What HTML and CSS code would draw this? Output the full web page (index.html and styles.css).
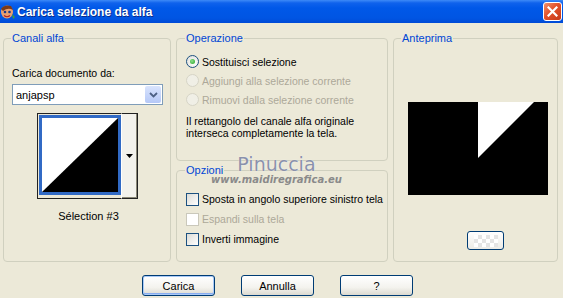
FILE: index.html
```html
<!DOCTYPE html>
<html lang="it">
<head>
  <meta charset="UTF-8">
  <title>Carica selezione da alfa</title>
  <link rel="stylesheet" href="styles.css">
</head>
<body>
  <div class="window">
    <div class="titlebar">
      <svg class="app-icon" width="15" height="16" viewBox="0 0 15 16">
        <ellipse cx="7" cy="8" rx="6" ry="6.5" fill="#e8a070"/>
        <path d="M1 5 Q4 0 11 2 L13 6 Q8 3 3 7 Z" fill="#7a3a1a"/>
        <circle cx="5" cy="8" r="1.3" fill="#1a3a8a"/>
        <circle cx="9.5" cy="8" r="1.3" fill="#1a3a8a"/>
        <path d="M4 11.5 Q7 14 10 11.5" stroke="#b02020" stroke-width="1.2" fill="none"/>
        <path d="M12 10 L15 13 L13 15 Z" fill="#3aa03a"/>
      </svg>
      <span class="title">Carica selezione da alfa</span>
      <span class="close">
        <svg width="11" height="11" viewBox="0 0 11 11">
          <path d="M1.5 1.5 L9.5 9.5 M9.5 1.5 L1.5 9.5" stroke="#fff" stroke-width="2.2" stroke-linecap="square"/>
        </svg>
      </span>
    </div>

    <div class="content">
      <fieldset class="group group-canali">
        <legend>Canali alfa</legend>
        <div class="field-label">Carica documento da:</div>
        <div class="select">
          <span class="select-value">anjapsp</span>
          <span class="select-btn">
            <svg width="9" height="6" viewBox="0 0 9 6">
              <path d="M1 1 L4.5 4.5 L8 1" stroke="#4d6185" stroke-width="1.8" fill="none"/>
            </svg>
          </span>
        </div>
        <div class="thumb">
          <div class="thumb-img">
            <svg width="76" height="74" viewBox="0 0 76 74" preserveAspectRatio="none">
              <rect width="76" height="74" fill="#fff"/>
              <polygon points="76,0 76,74 0,74" fill="#000"/>
            </svg>
          </div>
          <div class="thumb-btn">
            <svg width="7" height="4" viewBox="0 0 7 4"><polygon points="0,0 7,0 3.5,4" fill="#000"/></svg>
          </div>
        </div>
        <div class="thumb-caption">Sélection #3</div>
      </fieldset>

      <div class="col-mid">
        <fieldset class="group group-op">
          <legend>Operazione</legend>
          <div class="option"><span class="radio checked"></span>Sostituisci selezione</div>
          <div class="option disabled"><span class="radio"></span>Aggiungi alla selezione corrente</div>
          <div class="option disabled"><span class="radio"></span>Rimuovi dalla selezione corrente</div>
          <p class="note">Il rettangolo del canale alfa originale<br>interseca completamente la tela.</p>
        </fieldset>
        <fieldset class="group group-opt">
          <legend>Opzioni</legend>
          <div class="option opt-row"><span class="check"></span>Sposta in angolo superiore sinistro tela</div>
          <div class="option opt-row disabled"><span class="check"></span>Espandi sulla tela</div>
          <div class="option opt-row"><span class="check"></span>Inverti immagine</div>
        </fieldset>
        <div class="watermark">
          <span class="wm-name">Pinuccia</span>
          <span class="wm-url">www.maidiregrafica.eu</span>
        </div>
      </div>

      <fieldset class="group group-preview">
        <legend>Anteprima</legend>
        <div class="preview">
          <svg width="140" height="93" viewBox="0 0 140 93">
            <rect width="140" height="93" fill="#000"/>
            <polygon points="70,0 126,0 70,56" fill="#fff"/>
          </svg>
        </div>
        <div class="preview-btn"><span class="checker"></span></div>
      </fieldset>
    </div>

    <div class="buttons">
      <button class="btn default">Carica</button>
      <button class="btn">Annulla</button>
      <button class="btn">?</button>
    </div>
  </div>
</body>
</html>
```

FILE: styles.css
```css
body { margin: 0; background: #ece9d8; font-family: "Liberation Sans", Arial, sans-serif; font-size: 10.5px; color: #000; }
.window { width: 563px; height: 298px; background: #ece9d8; overflow: hidden; }

/* title bar */
.titlebar { height: 23px; display: flex; align-items: center; background: linear-gradient(#3d8af7 0, #0f62ec 3px, #0058e8 8px, #0055e3 18px, #004ad6 23px); color: #fff; }
.app-icon { margin-right: 2px; }
.title { font-size: 12px; font-weight: bold; text-shadow: 1px 1px 0 #0a2c8a; flex: 1; }
.close { width: 19px; height: 19px; margin-right: 1px; margin-top: -1px; box-sizing: border-box; border: 1px solid #fff; border-radius: 3px; background: linear-gradient(135deg, #f0916e 0, #e2512a 45%, #c5391a 100%); display: flex; align-items: center; justify-content: center; }

/* main area */
.content { display: grid; grid-template-columns: 168px 212px 165px; column-gap: 5px; padding: 8px 0 0 3px; height: 231px; }
.group { margin: 0; min-width: 0; border: 1px solid #d0d0bf; border-radius: 4px; padding: 0 7px 0 8px; }
.group legend { color: #0046d5; padding: 0 1px; line-height: 14px; margin-left: -1px; font-size: 11px; }

.field-label { margin-top: 21px; line-height: 14px; }
.select { margin-top: 4px; height: 21px; box-sizing: border-box; border: 1px solid #7f9db9; background: #fff; display: flex; align-items: center; justify-content: space-between; }
.select-value { padding-left: 3px; font-size: 11px; }
.select-btn { width: 16px; height: 17px; margin-right: 1px; border-radius: 2px; background: linear-gradient(#d9e4fd, #b5c8f7); display: flex; align-items: center; justify-content: center; }

.thumb { margin: 8px 0 0 25px; width: 101px; height: 86px; display: flex; }
.thumb-img { width: 84px; height: 86px; box-sizing: border-box; border: 1px solid #222; border-right: none; padding: 1px; }
.thumb-img svg { display: block; border: 3px solid #316ac5; }
.thumb-btn { flex: 1; box-sizing: border-box; border: 1px solid #222; border-left: 1px solid #fff; background: #f3f2ec; box-shadow: inset -1px -1px 0 #8a8876; display: flex; align-items: center; justify-content: center; }
.thumb-caption { margin-top: 10px; line-height: 14px; text-align: center; padding-left: 2px; font-size: 11px; }

.col-mid { display: flex; flex-direction: column; gap: 2px; position: relative; }
.group-op { height: 130px; box-sizing: border-box; padding: 7px 0 0 9px; }
.group-opt { height: 99px; box-sizing: border-box; padding: 12px 0 0 9px; }
.option { height: 19px; display: flex; align-items: center; white-space: nowrap; }
.option.disabled { color: #aca899; }
.opt-row { height: 20px; }
.radio { width: 13px; height: 13px; box-sizing: border-box; border: 1px solid #1c5180; border-radius: 50%; background: radial-gradient(circle at 65% 65%, #fff 0, #dcdcd7 100%); margin-right: 3px; display: flex; align-items: center; justify-content: center; }
.radio.checked::after { content: ""; width: 5px; height: 5px; border-radius: 50%; background: radial-gradient(circle at 40% 40%, #8ee08e, #21a121); }
.disabled .radio { border-color: #d6d4c6; background: #f0efe6; }
.check { width: 13px; height: 13px; box-sizing: border-box; border: 1px solid #1c5180; background: linear-gradient(135deg, #dcdcd7 0, #fff 100%); margin-right: 3px; }
.disabled .check { border-color: #cac8bb; background: #fff; }
.note { margin: 6px 0 0; line-height: 12px; white-space: nowrap; }

.watermark { position: absolute; left: 35px; top: 123px; display: flex; flex-direction: column; align-items: center; pointer-events: none; }
.wm-name { font-family: "DejaVu Sans", sans-serif; font-size: 19px; line-height: 20px; color: #8a91ab; text-shadow: 0 0 1px #fff; }
.wm-url { font-family: "DejaVu Sans", sans-serif; font-size: 10px; font-style: italic; font-weight: bold; color: #8a8a8a; line-height: 12px; margin-top: 0; }

.group-preview { padding: 57px 8px 0 8px; }
.preview { margin-left: 6px; height: 93px; }
.preview svg { display: block; }
.preview-btn { margin: 36px 0 0 65px; width: 37px; height: 19px; box-sizing: border-box; border: 1px solid #003c74; border-radius: 3px; background: linear-gradient(#fff, #ecebe6); display: flex; align-items: center; justify-content: center; }
.checker { width: 24px; height: 12px; background: conic-gradient(#e4e4e4 25%, #fff 0 50%, #e4e4e4 0 75%, #fff 0) 0 0 / 8px 8px; }

/* bottom buttons */
.buttons { display: flex; gap: 26px; padding: 13px 0 0 142px; }
.btn { width: 73px; height: 21px; padding: 0; font-family: inherit; font-size: 11px; color: #000; border: 1px solid #003c74; border-radius: 3px; background: linear-gradient(#fff 0, #f4f3ee 60%, #dcdad0 100%); }
.btn.default { box-shadow: inset 0 0 0 1px #aacaf7, inset 0 -1px 0 1px #89adf0; }
```
